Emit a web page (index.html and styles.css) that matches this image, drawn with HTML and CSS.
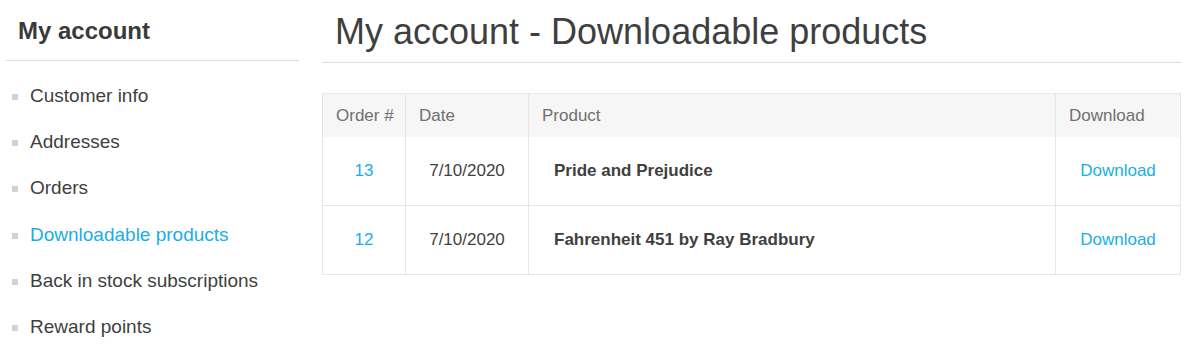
FILE: index.html
```html
<!DOCTYPE html>
<html lang="en">
<head>
    <meta charset="UTF-8">
    <meta name="viewport" content="width=device-width, initial-scale=1.0">
    <title>My account - Downloadable products</title>
    <link rel="stylesheet" href="styles.css">
</head>
<body>
    <div class="page">
        <!-- Sidebar -->
        <div class="side">
            <div class="side-title">My account</div>
            <ul class="side-list">
                <li><a href="#">Customer info</a></li>
                <li><a href="#">Addresses</a></li>
                <li><a href="#">Orders</a></li>
                <li class="active"><a href="#">Downloadable products</a></li>
                <li><a href="#">Back in stock subscriptions</a></li>
                <li><a href="#">Reward points</a></li>
            </ul>
        </div>

        <!-- Main -->
        <div class="main">
            <h1 class="page-title">My account - Downloadable products</h1>
            <table class="data-table">
                <colgroup>
                    <col class="col-order">
                    <col class="col-date">
                    <col class="col-product">
                    <col>
                </colgroup>
                <thead>
                    <tr>
                        <th>Order #</th>
                        <th>Date</th>
                        <th>Product</th>
                        <th>Download</th>
                    </tr>
                </thead>
                <tbody>
                    <tr>
                        <td class="center"><a href="#">13</a></td>
                        <td class="center">7/10/2020</td>
                        <td class="product">Pride and Prejudice</td>
                        <td class="center"><a href="#">Download</a></td>
                    </tr>
                    <tr>
                        <td class="center"><a href="#">12</a></td>
                        <td class="center">7/10/2020</td>
                        <td class="product">Fahrenheit 451 by Ray Bradbury</td>
                        <td class="center"><a href="#">Download</a></td>
                    </tr>
                </tbody>
            </table>
        </div>
    </div>
</body>
</html>
```

FILE: styles.css
```css
* {
    margin: 0;
    padding: 0;
    box-sizing: border-box;
}

body {
    font-family: "Liberation Sans", Arial, sans-serif;
    background-color: #fff;
    color: #444;
}

a {
    color: #1aaee8;
    text-decoration: none;
}

.page {
    display: flex;
    gap: 23px;
    padding: 0 19px 0 6px;
}

/* Sidebar */
.side {
    width: 293px;
    flex-shrink: 0;
}

.side-title {
    font-size: 24px;
    font-weight: bold;
    line-height: 28px;
    padding: 17px 12px 15px;
    border-bottom: 1px solid #ddd;
    color: #3a3a3a;
}

.side-list {
    list-style: none;
    margin-top: 12px;
}

.side-list li {
    display: flex;
    align-items: center;
    padding: 12.1px 0 12.1px 6px;
    font-size: 19px;
    line-height: 22px;
}

.side-list li::before {
    content: "";
    width: 6px;
    height: 6px;
    margin: 2px 12px 0 0;
    background-color: #d2d2d2;
}

.side-list li a {
    color: #3f3f3f;
}

.side-list li.active a {
    color: #1aaee8;
}

/* Main */
.main {
    flex: 1;
}

.page-title {
    font-size: 36px;
    font-weight: normal;
    line-height: 42px;
    padding: 11px 13px 9px;
    border-bottom: 1px solid #ddd;
    color: #3f3f3f;
}

.data-table {
    width: 100%;
    margin-top: 30px;
    border-collapse: collapse;
    border: 1px solid #e6e6e6;
    font-size: 17px;
}

.col-order { width: 83px; }
.col-date { width: 123px; }
.col-product { width: 527px; }

.data-table th {
    background-color: #f6f6f6;
    color: #707070;
    font-weight: normal;
    text-align: left;
    white-space: nowrap;
    padding: 12px 8px 12px 13px;
    line-height: 19px;
    border-left: 1px solid #e6e6e6;
}

.data-table td {
    padding: 24px 10px;
    line-height: 20px;
    color: #3f3f3f;
    border-left: 1px solid #e6e6e6;
    border-bottom: 1px solid #e6e6e6;
}

.data-table td.center {
    text-align: center;
}

.data-table td.product {
    padding-left: 25px;
    font-weight: bold;
}
```
